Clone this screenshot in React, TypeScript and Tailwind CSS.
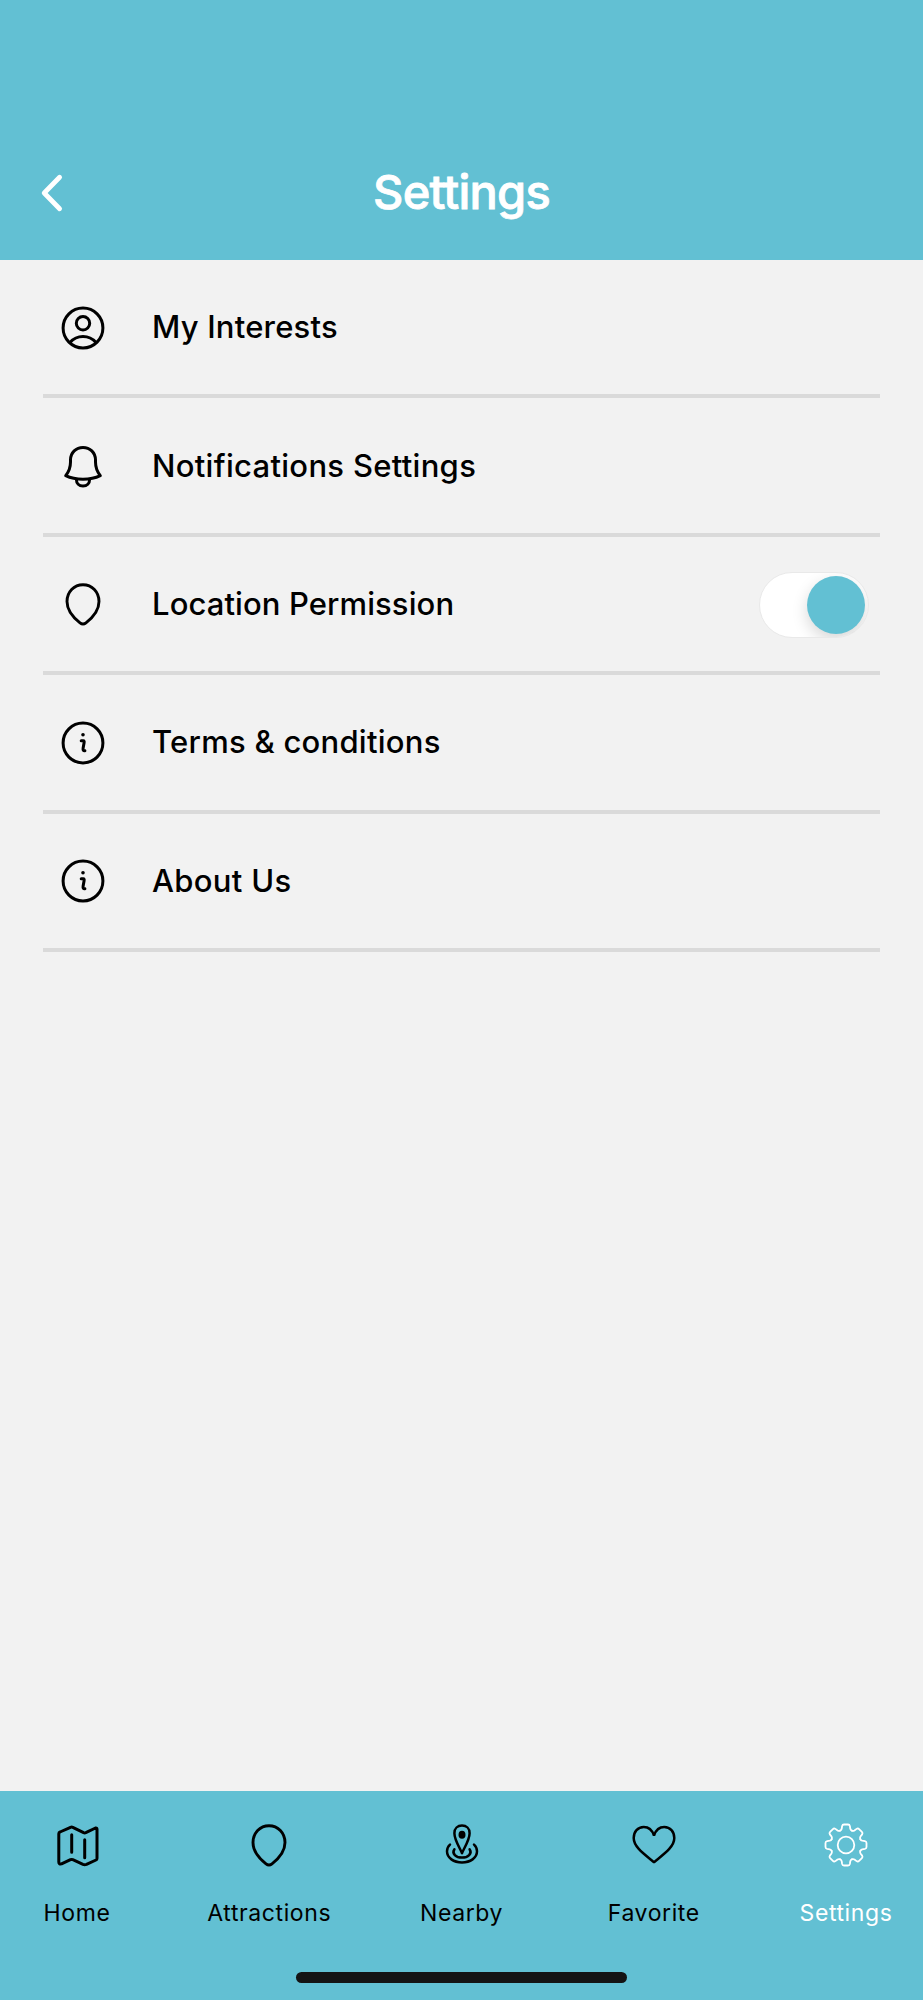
import * as React from 'react';

interface IconProps {
  children: React.ReactNode;
  strokeWidth?: number;
}

const Icon: React.FC<IconProps> = ({ children, strokeWidth = 3 }) => (
  <svg
    viewBox="-24 -24 48 48"
    className="block h-12 w-12 shrink-0"
    fill="none"
    stroke="currentColor"
    strokeWidth={strokeWidth}
    strokeLinecap="round"
    strokeLinejoin="round"
    aria-hidden="true"
  >
    {children}
  </svg>
);

const UserIcon = () => (
  <Icon>
    <circle r="19.9" />
    <circle cy="-4.7" r="6.7" />
    <path d="M-13 14.4C-9.4 10.3-4.8 8.4 0 8.4S9.4 10.3 13 14.4" />
  </Icon>
);

const BellIcon = () => (
  <Icon>
    <path d="M-17.3 9.7C-14 5.5-12.5 1-12.5-4V-6.3C-12.3-13.5-7-18.6 0-18.6S12.3-13.5 12.5-6.3V-4C12.5 1 14 5.5 17.3 9.7C12 12.3 6 13.3 0 13.3S-12 12.3-17.3 9.7Z" />
    <path d="M-6.6 13.5C-6.6 17.5-4 20 0 20S6.6 17.5 6.6 13.5" />
  </Icon>
);

const PinIcon = () => (
  <Icon strokeWidth={2.9}>
    <path d="M0-19.3C-9-19.3-16-12-16-2.5C-16 7-8.5 14.5-3 18.8C-1.2 20.2 1.2 20.2 3 18.8C8.5 14.5 16 7 16-2.5C16-12 9-19.3 0-19.3Z" />
  </Icon>
);

const InfoIcon = () => (
  <Icon>
    <circle r="19.9" />
    <circle cy="-8.2" r="1.8" fill="currentColor" stroke="none" />
    <path d="M-1.8-2.2H.2C1.2-2.2 1.3-1.4 1.1-.4L.1 5.2C-.2 7.4.5 8 1.9 7.8" strokeWidth={3} />
  </Icon>
);

const MapIcon = () => (
  <Icon>
    <path d="M-18.2-11.2Q-18.2-12.5-17-13L-6.5-17.7Q-5.3-18.2-4.2-17.7L6.6-12.3Q7.7-11.8 8.8-12.3L18.5-17Q20-17.5 20-15.8V13.2Q20 14.5 19 15L9.5 19.3Q7.7 20 6 19.3L-4.2 14.7Q-5.3 14.2-6.5 14.7L-15.5 18.9Q-18.2 19.5-18.2 17Z" />
    <path d="M-5.3-10.2V7.3M7.7-5.3V12.8" />
  </Icon>
);

const NearbyIcon = () => (
  <Icon strokeWidth={2.5}>
    <path d="M0 8.2C-2.4 2.5-7.6-5.2-7.6-11.8C-7.6-16.4-4.4-19.4 0-19.4S7.6-16.4 7.6-11.8C7.6-5.2 2.4 2.5 0 8.2Z" />
    <ellipse cy="-10.2" rx="3.5" ry="4" fill="currentColor" stroke="none" />
    <path d="M-12-.4C-14 1.3-15 3.6-15 6.3C-15 13-8.3 17.4 0 17.4S15 13 15 6.3C15 3.6 14 1.3 12-.4" />
    <path d="M-7.6 4.2C-10.6 8.6-6 12.6 0 12.6S10.6 8.6 7.6 4.2" />
  </Icon>
);

const HeartIcon = () => (
  <Icon strokeWidth={2.5}>
    <path
      strokeLinejoin="bevel"
      d="M0-9.5C-1.8-14.8-5.4-18-10.2-18C-16.2-18-20.3-13.3-20.3-7C-20.3 2-10 9 0 17.2C10 9 20.3 2 20.3-7C20.3-13.3 16.2-18 10.2-18C5.4-18 1.8-14.8 0-9.5Z"
    />
  </Icon>
);

const TOOTH_ANGLES = [0, 45, 90, 135, 180, 225, 270, 315];

const GearIcon = () => (
  <Icon strokeWidth={1.8}>
    <circle r="8.3" />
    {TOOTH_ANGLES.map((angle) => (
      <path
        key={angle}
        transform={`rotate(${angle})`}
        d="M-5.93-14.3C-4.8-14.8-4.5-15.3-4.3-16.2L-3.9-18.9Q-3.6-20.5-2-20.5H2Q3.6-20.5 3.9-18.9L4.3-16.2C4.5-15.3 4.8-14.8 5.93-14.3"
      />
    ))}
  </Icon>
);

const Header = () => (
  <header className="grid h-[260px] shrink-0 grid-cols-[100px_1fr_100px] items-center bg-[#62c0d3] pt-[126px] text-white">
    <button aria-label="Back" className="pl-[40px]">
      <svg viewBox="0 0 24 40" className="block h-10 w-6" fill="none" stroke="currentColor" strokeWidth="4.8" strokeLinecap="round" strokeLinejoin="round">
        <path d="M19.6 4.2L4.2 20L19.6 35.8" />
      </svg>
    </button>
    <h1 className="pb-[2px] text-center text-[47px] font-medium leading-[60px] tracking-[-0.8px] [-webkit-text-stroke:0.8px_white]">
      Settings
    </h1>
  </header>
);

const Toggle = () => (
  <button
    role="switch"
    aria-checked="true"
    aria-label="Location Permission"
    className="mr-[11px] mt-[3px] flex h-[66px] w-[110px] items-center justify-end overflow-hidden rounded-full border border-[#e9e9e9] bg-white pr-[3px]"
  >
    <span className="h-[58px] w-[58px] rounded-full bg-[#62c0d3] shadow-[0_6px_16px_rgba(0,0,0,0.16)]" />
  </button>
);

interface SettingsItem {
  label: string;
  icon: React.ReactNode;
  tracking: string;
  control?: React.ReactNode;
}

const items: SettingsItem[] = [
  { label: 'My Interests', icon: <UserIcon />, tracking: 'tracking-[0.2px]' },
  { label: 'Notifications Settings', icon: <BellIcon />, tracking: 'tracking-[0.3px]' },
  { label: 'Location Permission', icon: <PinIcon />, tracking: 'tracking-[0.1px]', control: <Toggle /> },
  { label: 'Terms & conditions', icon: <InfoIcon />, tracking: 'tracking-[0.25px]' },
  { label: 'About Us', icon: <InfoIcon />, tracking: 'tracking-[0.3px]' },
];

const tabs = [
  { label: 'Home', icon: <MapIcon /> },
  { label: 'Attractions', icon: <PinIcon /> },
  { label: 'Nearby', icon: <NearbyIcon /> },
  { label: 'Favorite', icon: <HeartIcon /> },
  { label: 'Settings', icon: <GearIcon />, active: true },
];

const App: React.FC = () => {
  return (
    <div className="flex h-[2000px] w-[923px] flex-col bg-[#f2f2f2] font-['Inter',sans-serif] text-black">
      <Header />
      <main className="flex-1 px-[43px]">
        {items.map((item) => (
          <div key={item.label} className="flex h-[138.4px] items-center border-b-4 border-[#dadada] pl-[16px]">
            <div className="pt-[1px]">{item.icon}</div>
            <span className={`ml-[45px] flex-1 text-[31px] font-medium leading-[40px] ${item.tracking}`}>
              {item.label}
            </span>
            {item.control}
          </div>
        ))}
      </main>
      <footer className="flex h-[209px] shrink-0 flex-col items-center bg-[#62c0d3] pt-[30px]">
        <nav className="flex w-full justify-between">
          {tabs.map((tab) => (
            <button
              key={tab.label}
              className={`flex w-[154px] flex-col items-center ${tab.active ? 'text-white' : 'text-black'}`}
            >
              {tab.icon}
              <span className="mt-[29px] text-[23px] leading-[30px] tracking-[0.6px]">{tab.label}</span>
            </button>
          ))}
        </nav>
        <div className="mt-[44px] h-[11px] w-[331px] rounded-full bg-[#141414]" />
      </footer>
    </div>
  );
};

export default App;
